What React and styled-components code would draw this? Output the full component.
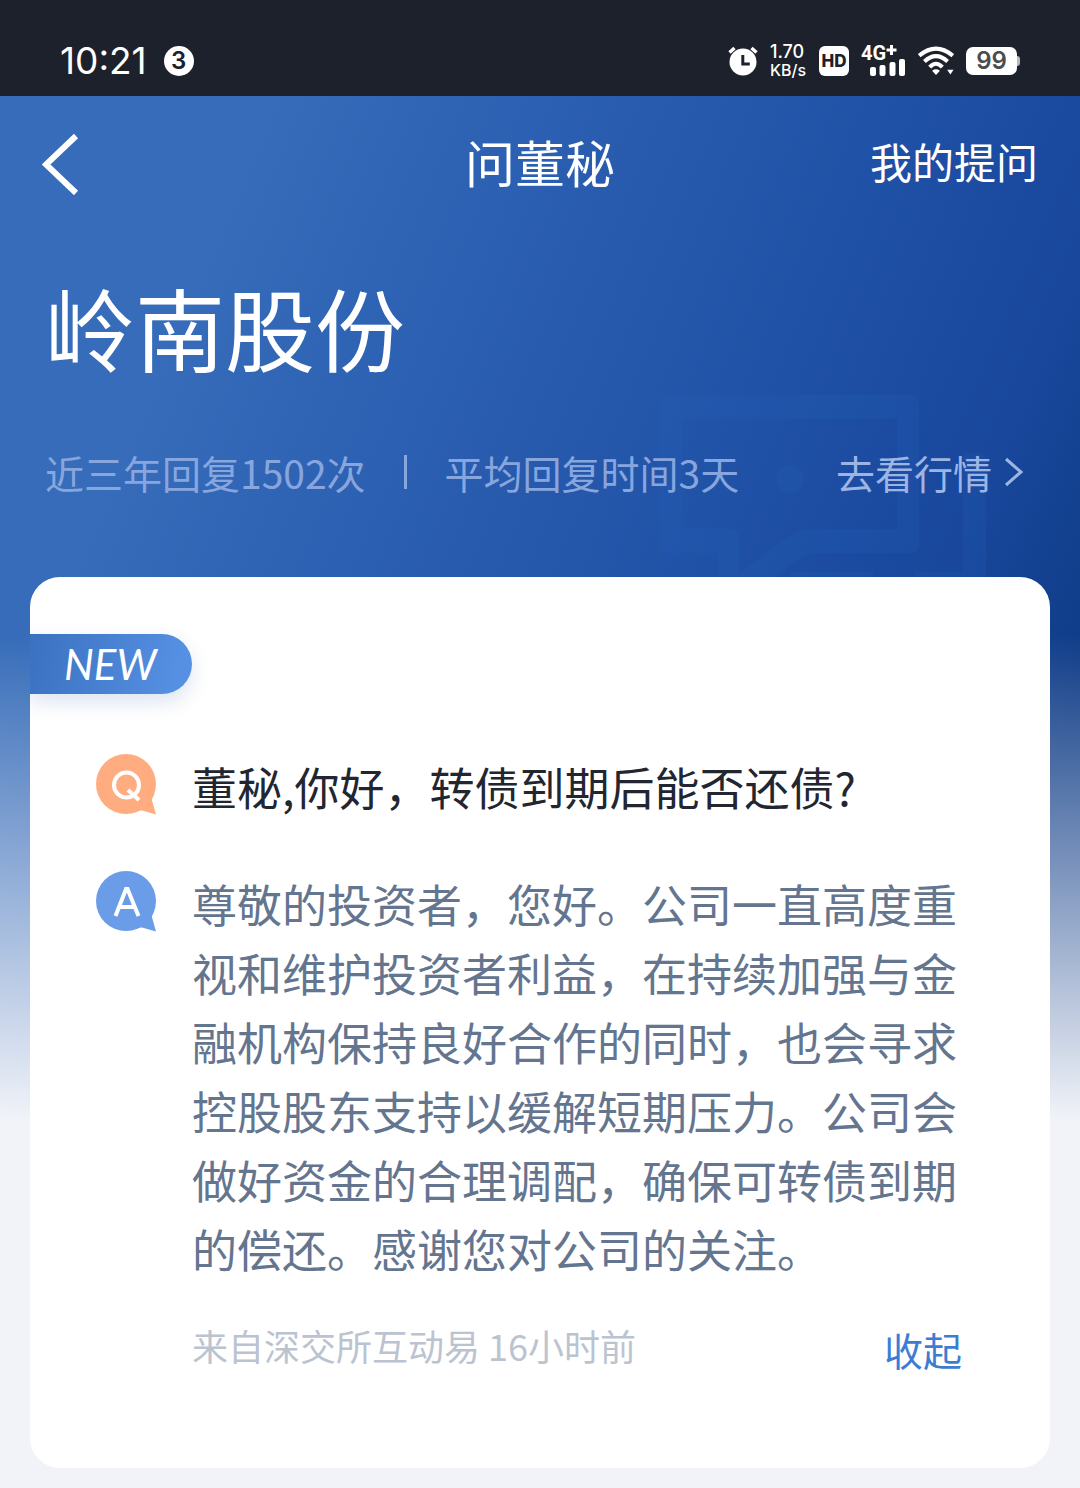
import React from "react";
import styled, { createGlobalStyle } from "styled-components";

const GlobalStyle = createGlobalStyle`
  *, *::before, *::after { box-sizing: border-box; }
  body {
    margin: 0;
    background: #f1f3f8;
    font-family: "Noto Sans CJK SC", "Noto Sans", sans-serif;
  }
  h1, h2, p { margin: 0; font-weight: 400; }
  svg { display: block; flex: none; }
`;

const Page = styled.div`
  min-height: 100vh;
  background: #f1f3f8;
`;

const StatusBar = styled.div`
  display: flex;
  align-items: center;
  justify-content: space-between;
  height: 96px;
  padding: 26px 60px 0;
  background: #1d212b;
  color: #fff;
  font-family: Inter, Roboto, sans-serif;
`;

const StatusGroup = styled.div`
  display: flex;
  align-items: center;
  gap: ${(p) => p.$gap}px;
`;

const Clock = styled.time`
  font-size: 37px;
  line-height: 48px;
`;

const Count = styled.span`
  display: grid;
  place-items: center;
  width: 30px;
  height: 30px;
  border-radius: 50%;
  background: #fff;
  color: #1d212b;
  font-size: 24px;
  font-weight: 600;
  line-height: 30px;
`;

const Speed = styled.span`
  display: flex;
  flex-direction: column;
  width: 37px;
  font-size: 18px;
  font-weight: 500;
  line-height: 18px;
  white-space: nowrap;
`;

const SpeedUnit = styled.span`
  font-size: 16px;
`;

const HdTag = styled.span`
  display: grid;
  place-items: center;
  width: 30px;
  height: 30px;
  border-radius: 6px;
  background: #fff;
  color: #1d212b;
  font-size: 17px;
  font-weight: 800;
  line-height: 30px;
`;

const Battery = styled.span`
  display: flex;
  align-items: center;
`;

const BatteryBody = styled.span`
  width: 51px;
  height: 28px;
  border-radius: 7px;
  background: #fff;
  color: #4c4c4c;
  font-size: 24px;
  font-weight: 600;
  line-height: 28px;
  text-align: center;
`;

const BatteryTip = styled.span`
  width: 3px;
  height: 10px;
  border-radius: 0 3px 3px 0;
  background: #b9babd;
`;

const Backdrop = styled.main`
  position: relative;
  padding-bottom: 20px;
  background:
    linear-gradient(180deg, rgba(241, 243, 248, 0) 540px, #f1f3f8 1024px),
    linear-gradient(113deg, #366cb9 18%, #2f64b5 30%, #2557ab 49%, #1f51a6 60%, #18479c 76%, #0f3c86 88%);
  background-size: 100% 1024px;
  background-repeat: no-repeat;
`;

const Watermark = styled.svg`
  position: absolute;
  top: 298px;
  right: 94px;
`;

const NavBar = styled.header`
  display: grid;
  grid-template-columns: 1fr auto 1fr;
  align-items: center;
  height: 134px;
  padding: 0 42px;
  color: #fff;
`;

const BackButton = styled.button`
  justify-self: start;
  padding: 0;
  border: 0;
  background: none;
  color: inherit;
  cursor: pointer;
`;

const Title = styled.h1`
  padding-bottom: 4px;
  font-size: 50px;
  line-height: 72px;
`;

const NavLink = styled.a`
  justify-self: end;
  padding-bottom: 4px;
  color: inherit;
  font-size: 42px;
  line-height: 60px;
  text-decoration: none;
`;

const Company = styled.section`
  position: relative;
  padding: 30px 56px 0 45px;
`;

const CompanyName = styled.h2`
  color: #fff;
  font-size: 90px;
  line-height: 132px;
`;

const Stats = styled.div`
  display: flex;
  align-items: center;
  margin-top: 50px;
  color: #88a6de;
  font-size: 39px;
  line-height: 60px;
  white-space: nowrap;
`;

const Divider = styled.span`
  width: 3px;
  height: 34px;
  margin: 0 38px;
  background: currentColor;
`;

const QuoteLink = styled.a`
  display: flex;
  align-items: center;
  gap: 12px;
  margin-left: auto;
  color: #9db5e4;
  text-decoration: none;
`;

const Card = styled.article`
  position: relative;
  margin: 75px 30px 0;
  padding: 57px 88px 89px 66px;
  border-radius: 30px;
  background: #fff;
`;

const NewBadge = styled.div`
  width: 162px;
  height: 60px;
  margin-left: -66px;
  padding-left: 34px;
  border-radius: 0 30px 30px 0;
  background: linear-gradient(100deg, #3b71c1, #5690e2 90%);
  box-shadow: 0 8px 20px rgba(40, 80, 160, 0.16);
  clip-path: inset(-30px -30px -40px 0);
  color: #fff;
  font-family: Lato, sans-serif;
  font-size: 42px;
  font-style: italic;
  line-height: 60px;
`;

const Entry = styled.div`
  display: flex;
  align-items: flex-start;
  gap: 36px;
  margin-top: ${(p) => p.$top}px;
`;

const EntryIcon = styled.svg`
  margin-top: 2px;
`;

const EntryText = styled.p`
  flex: 1;
  color: ${(p) => p.$color};
  font-size: 45px;
  line-height: 69px;
`;

const CardFooter = styled.footer`
  display: flex;
  align-items: flex-start;
  justify-content: space-between;
  margin: 28px 0 0 96px;
`;

const Source = styled.p`
  padding-top: 4px;
  color: #bcc3d0;
  font-size: 36px;
  line-height: 60px;
`;

const CollapseButton = styled.button`
  padding: 8px 0 0;
  border: 0;
  background: none;
  color: #3c7dd3;
  font: inherit;
  font-size: 39px;
  line-height: 60px;
  cursor: pointer;
`;

function AlarmIcon() {
  return (
    <svg width="30" height="30" viewBox="0 0 30 30" aria-label="闹钟">
      <circle cx="15" cy="16" r="13.5" fill="#fff" />
      <path d="M1.5 6.5 6.5 2M28.5 6.5 23.5 2" stroke="#fff" strokeWidth="3.4" />
      <path d="M14.8 9v9h7" fill="none" stroke="#1d212b" strokeWidth="3" />
    </svg>
  );
}

function SignalIcon() {
  return (
    <svg width="45" height="40" viewBox="0 0 45 40" aria-label="信号">
      <text x="0" y="19" fill="#fff" fontFamily="Roboto, sans-serif" fontSize="20" fontWeight="700">4G</text>
      <path d="M30.500 4v10M25.500 9h10" stroke="#fff" strokeWidth="3" />
      <g fill="#fff">
        <rect x="9" y="26" width="6" height="9" rx="2" />
        <rect x="18.5" y="24" width="6" height="11" rx="2" />
        <rect x="28.5" y="21" width="6" height="14" rx="2" />
        <rect x="38" y="18" width="6" height="17" rx="2" />
      </g>
    </svg>
  );
}

function WifiIcon() {
  return (
    <svg width="36" height="30" viewBox="0 0 37 30" aria-label="无线网络">
      <g fill="none" stroke="#fff" strokeWidth="4.2">
        <path d="M1.200 9.500Q18.500-5 35.800 9.500" />
        <path d="M6.600 15.500Q18.500 4.500 30.400 15.500" />
        <path d="M12 21.300Q18.500 14.500 25 21.300" />
      </g>
      <path d="M14.500 25Q18.500 22 22.500 25L18.500 29.500Z" fill="#fff" />
      <path d="M30 24h6.500l-3.200 5Z" fill="#fff" />
    </svg>
  );
}

function Bubble({ color, children }) {
  return (
    <EntryIcon width="60" height="61" viewBox="0 0 60 61" aria-hidden="true">
      <circle cx="30" cy="30" r="30" fill={color} />
      <path d="M58 40Q55 45 56.500 48L60 60.500 46 56.500Q43 56 38 58Z" fill={color} />
      <g fill="none" stroke="#fff" strokeWidth="4">{children}</g>
    </EntryIcon>
  );
}

export default function App() {
  return (
    <Page>
      <GlobalStyle />
      <StatusBar>
        <StatusGroup $gap={17}>
          <Clock>10:21</Clock>
          <Count>3</Count>
        </StatusGroup>
        <StatusGroup $gap={12}>
          <AlarmIcon />
          <Speed>
            1.70
            <SpeedUnit>KB/s</SpeedUnit>
          </Speed>
          <HdTag>HD</HdTag>
          <SignalIcon />
          <WifiIcon />
          <Battery>
            <BatteryBody>99</BatteryBody>
            <BatteryTip />
          </Battery>
        </StatusGroup>
      </StatusBar>

      <Backdrop>
        <Watermark width="327" height="190" viewBox="0 0 327 190" aria-hidden="true">
          <g fill="#2a6cc0" fillOpacity="0.15">
            <path
              fillRule="evenodd"
              d="M9 1H252a8 8 0 0 1 8 8V151a8 8 0 0 1-8 8H164q-14 0-24 7L106 190H59V159H9a8 8 0 0 1-8-8V9a8 8 0 0 1 8-8ZM24 25V135H72a8 8 0 0 1 8 8V179L126 145q14-10 26-10H238V25Z"
            />
            <circle cx="131" cy="85" r="14" />
            <path d="M304 59h15a8 8 0 0 1 8 8V190H256V178H304ZM134 178H214V190H120Z" />
          </g>
        </Watermark>

        <NavBar>
          <BackButton type="button" aria-label="返回">
            <svg width="42" height="64" viewBox="6 0 42 64">
              <path d="M40 5 10 33.500 40 62" fill="none" stroke="currentColor" strokeWidth="6" />
            </svg>
          </BackButton>
          <Title>问董秘</Title>
          <NavLink href="#questions">我的提问</NavLink>
        </NavBar>

        <Company>
          <CompanyName>岭南股份</CompanyName>
          <Stats>
            <span>近三年回复1502次</span>
            <Divider />
            <span>平均回复时间3天</span>
            <QuoteLink href="#quote">
              去看行情
              <svg width="20" height="30" viewBox="0 0 20 30" aria-hidden="true">
                <path d="M2 2 17 15 2 28" fill="none" stroke="currentColor" strokeWidth="3" />
              </svg>
            </QuoteLink>
          </Stats>
        </Company>

        <Card>
          <NewBadge>NEW</NewBadge>
          <Entry $top={58}>
            <Bubble color="#ffad80">
              <circle cx="30.500" cy="31" r="12.500" />
              <path d="M32 36 43 46" />
            </Bubble>
            <EntryText $color="#222630">董秘,你好，转债到期后能否还债?</EntryText>
          </Entry>
          <Entry $top={48}>
            <Bubble color="#6a9ce8">
              <path d="M19.500 45 30 18h1.500L42.500 45M23 36H39" />
            </Bubble>
            <EntryText $color="#64758f">
              尊敬的投资者，您好。公司一直高度重视和维护投资者利益，在持续加强与金融机构保持良好合作的同时，也会寻求控股股东支持以缓解短期压力。公司会做好资金的合理调配，确保可转债到期的偿还。感谢您对公司的关注。
            </EntryText>
          </Entry>
          <CardFooter>
            <Source>来自深交所互动易 16小时前</Source>
            <CollapseButton type="button">收起</CollapseButton>
          </CardFooter>
        </Card>
      </Backdrop>
    </Page>
  );
}
